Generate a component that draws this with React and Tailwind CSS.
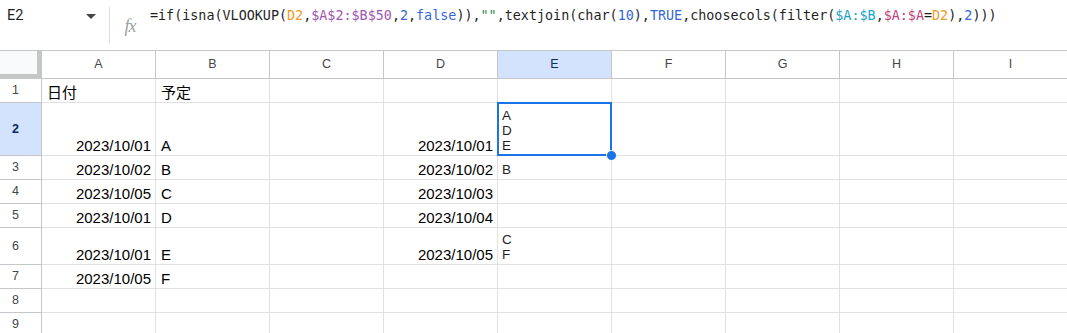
import React from 'react';

const COLS = ['A', 'B', 'C', 'D', 'E', 'F', 'G', 'H', 'I'];

const ROWS = [
  { n: 1, h: 'h-[24px]', a: '日付', b: '予定' },
  { n: 2, h: 'h-[53px]', a: '2023/10/01', b: 'A', d: '2023/10/01', e: ['A', 'D', 'E'], sel: true },
  { n: 3, h: 'h-[24px]', a: '2023/10/02', b: 'B', d: '2023/10/02', e: ['B'] },
  { n: 4, h: 'h-[24px]', a: '2023/10/05', b: 'C', d: '2023/10/03' },
  { n: 5, h: 'h-[24px]', a: '2023/10/01', b: 'D', d: '2023/10/04' },
  { n: 6, h: 'h-[37px]', a: '2023/10/01', b: 'E', d: '2023/10/05', e: ['C', 'F'] },
  { n: 7, h: 'h-[24px]', a: '2023/10/05', b: 'F' },
  { n: 8, h: 'h-[24px]' },
  { n: 9, h: 'h-[24px]' },
];

const isDate = (v) => /^\d{4}\//.test(v || '');

function Formula() {
  return (
    <div className="pt-[6px] leading-[20px] text-[13.4px] text-[#1f1f1f] font-['DejaVu_Sans_Mono',monospace] whitespace-nowrap">
      <span>=if(isna(VLOOKUP(</span>
      <span className="text-[#f09a2a]">D2</span>
      <span>,</span>
      <span className="text-[#a056b2]">$A$2:$B$50</span>
      <span>,</span>
      <span className="text-[#3367d6]">2</span>
      <span>,</span>
      <span className="text-[#3367d6]">false</span>
      <span>)),</span>
      <span className="text-[#1e8e3e]">""</span>
      <span>,textjoin(char(</span>
      <span className="text-[#3367d6]">10</span>
      <span>),</span>
      <span className="text-[#3367d6]">TRUE</span>
      <span>,choosecols(filter(</span>
      <span className="text-[#1ca3c8]">$A:$B</span>
      <span>,</span>
      <span className="text-[#c2437a]">$A:$A</span>
      <span>=</span>
      <span className="text-[#f09a2a]">D2</span>
      <span>),</span>
      <span className="text-[#3367d6]">2</span>
      <span>)))</span>
    </div>
  );
}

function Cell({ value, lines, sel }) {
  return (
    <div className="relative w-[114px] shrink-0 border-r border-b border-[#e1e1e1] flex items-end overflow-visible">
      {value && (
        <div
          className={
            'w-full pb-[1px] leading-[17px] text-[15px] text-black whitespace-nowrap ' +
            (isDate(value) ? 'text-right pr-[4px]' : 'pl-[5px]')
          }
        >
          {value}
        </div>
      )}
      {lines && (
        <div className="pl-[4px] pb-[2px] leading-[15px] text-[13.5px] text-[#1f1f1f]">
          {lines.map((l, i) => (
            <div key={i}>{l}</div>
          ))}
        </div>
      )}
      {sel && (
        <>
          <div className="absolute -left-[1px] -top-[1px] -right-[1px] -bottom-[1px] border-2 border-[#1a73e8] z-10" />
          <div className="absolute -right-[6px] -bottom-[6px] w-[11px] h-[11px] rounded-full bg-[#1a73e8] border border-white z-20" />
        </>
      )}
    </div>
  );
}

export default function App() {
  return (
    <div className="w-[1067px] h-[333px] overflow-hidden bg-white font-['Liberation_Sans','Noto_Sans_CJK_JP',sans-serif]">
      {/* formula bar */}
      <div className="h-[51px] flex border-b border-[#c4c7c5]">
        <div className="w-[109px] shrink-0 flex items-start pt-[6px] pl-[7px] pr-[13px]">
          <span className="flex-1 font-['Roboto',sans-serif] text-[14.5px] leading-[20px] text-[#1f1f1f]">E2</span>
          <span className="mt-[8px] w-0 h-0 border-l-[5px] border-r-[5px] border-t-[5px] border-l-transparent border-r-transparent border-t-[#444746]" />
        </div>
        <div className="w-px bg-[#dadce0] my-[7px]" />
        <div className="w-[40px] shrink-0 flex items-center justify-center pt-[3px]">
          <span className="font-['Liberation_Serif',serif] italic text-[18px] text-[#9aa0a6] tracking-[-1px]">fx</span>
        </div>
        <Formula />
      </div>

      {/* column headers */}
      <div className="flex h-[28px]">
        <div className="w-[42px] shrink-0 bg-[#f8f9fa] border-r-[5px] border-b-[5px] border-[#c4c7c5]" />
        {COLS.map((c) => (
          <div
            key={c}
            className={
              'w-[114px] shrink-0 border-r border-b border-[#c4c7c5] flex items-center justify-center text-[12.5px] ' +
              (c === 'E' ? 'bg-[#d3e3fd] text-[#0b2a5e]' : 'text-[#444746]')
            }
          >
            {c}
          </div>
        ))}
      </div>

      {/* rows */}
      {ROWS.map((r) => (
        <div key={r.n} className={'flex ' + r.h}>
          <div
            className={
              'w-[42px] shrink-0 border-r border-b border-[#c4c7c5] flex items-center justify-center pr-[10px] text-[12.5px] ' +
              (r.sel ? 'bg-[#d3e3fd] text-[#0b2a5e] font-bold' : 'text-[#444746]')
            }
          >
            {r.n}
          </div>
          <Cell value={r.a} />
          <Cell value={r.b} />
          <Cell />
          <Cell value={r.d} />
          <Cell lines={r.e} sel={r.sel} />
          <Cell />
          <Cell />
          <Cell />
          <Cell />
        </div>
      ))}
    </div>
  );
}
